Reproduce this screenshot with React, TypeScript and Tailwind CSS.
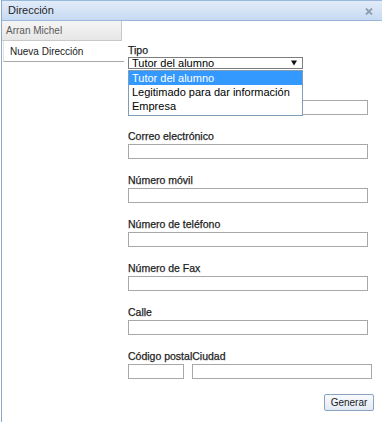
import React from "react";

const labelCls =
  "block h-[12px] leading-[12px] text-[10.5px] text-[#1e1e1e] [-webkit-text-stroke:0.25px_#1e1e1e] whitespace-nowrap";
const inputCls = "block h-[15px] w-[240px] border border-[#a8a8a8] bg-white";

function Field({ label, mt }: { label: string; mt: string }) {
  return (
    <div className={mt}>
      <div className={labelCls}>{label}</div>
      <div className={`${inputCls} mt-[2px]`} />
    </div>
  );
}

export default function App() {
  return (
    <div
      className="w-[382px] h-[422px] overflow-hidden bg-white pl-[1px]"
      style={{ fontFamily: '"Liberation Sans", Arial, sans-serif' }}
    >
      <div className="h-full border-l border-[#8fa8c8] flex flex-col">
        {/* Title bar */}
        <div className="h-[21px] shrink-0 border-t border-b border-[#99b6dc] bg-gradient-to-b from-[#e2ecf9] to-[#c7daf2] flex items-center justify-between pl-[6px] pr-[9px]">
          <span className="text-[11px] leading-[19px] text-[#1f1f1f]">Dirección</span>
          <svg width="8" height="7" viewBox="0 0 8 7" className="mt-[1px]">
            <path d="M1 0.5 L7 6.5 M7 0.5 L1 6.5" stroke="#8d9cb0" strokeWidth="1.8" />
          </svg>
        </div>

        <div className="flex flex-1">
          {/* Tabs */}
          <div className="w-[120px] shrink-0 flex flex-col">
            <div className="h-[20px] border-r border-b border-[#c8c8c8] bg-gradient-to-b from-[#f5f5f5] to-[#e7e7e7] flex items-center pl-[4px]">
              <span className="text-[10px] text-[#5a5a5a]">Arran Michel</span>
            </div>
            <div className="h-[21px] w-[121px] border-b border-[#a9a9a9] bg-white flex items-center pl-[6px] ml-[1px] border-l border-l-[#e2e2e2]">
              <span className="text-[10px] text-[#202020]">Nueva Dirección</span>
            </div>
          </div>

          {/* Form */}
          <div className="flex flex-col pl-[6px] pt-[23px]">
            <div>
              <div className={labelCls}>Tipo</div>
              <div className="relative mt-[1px]">
                <div className="h-[12px] w-[175px] border border-[#7d7d7d] bg-white flex items-center justify-between pl-[3px] pr-[5px]">
                  <span className="text-[11px] leading-[10px] text-black">Tutor del alumno</span>
                  <svg width="6" height="6" viewBox="0 0 6 6">
                    <path d="M0 0.5 H6 L3 5.5 Z" fill="#111" />
                  </svg>
                </div>
                <div className="absolute left-0 top-[13px] z-10 w-[175px] border border-[#7f9db9] bg-white pb-[2px]">
                  <div className="h-[14px] bg-[#3399ff] text-white text-[11px] leading-[14px] pl-[3px]">
                    Tutor del alumno
                  </div>
                  <div className="h-[14px] text-black text-[11px] leading-[14px] pl-[3px] whitespace-nowrap">
                    Legitimado para dar información
                  </div>
                  <div className="h-[14px] text-black text-[11px] leading-[14px] pl-[3px]">Empresa</div>
                </div>
              </div>
            </div>

            {/* field hidden behind the open list */}
            <div className="mt-[17px]">
              <div className="h-[12px]" />
              <div className={`${inputCls} mt-[2px]`} />
            </div>
            <Field label="Correo electrónico" mt="mt-[15px]" />
            <Field label="Número móvil" mt="mt-[15px]" />
            <Field label="Número de teléfono" mt="mt-[15px]" />
            <Field label="Número de Fax" mt="mt-[15px]" />
            <Field label="Calle" mt="mt-[15px]" />

            <div className="mt-[15px]">
              <div className={labelCls}>Código postalCiudad</div>
              <div className="flex gap-[8px] mt-[2px]">
                <div className="h-[15px] w-[56px] border border-[#a8a8a8] bg-white" />
                <div className="h-[15px] w-[180px] border border-[#a8a8a8] bg-white" />
              </div>
            </div>

            <div className="mt-[15px] flex justify-end w-[246px]">
              <button className="h-[17px] w-[50px] rounded-[2px] border border-[#8aa2c2] bg-gradient-to-b from-[#f8fafd] to-[#e3eaf3] text-[10px] leading-[15px] text-[#1a1a1a]">
                Generar
              </button>
            </div>
          </div>
        </div>
      </div>
    </div>
  );
}
